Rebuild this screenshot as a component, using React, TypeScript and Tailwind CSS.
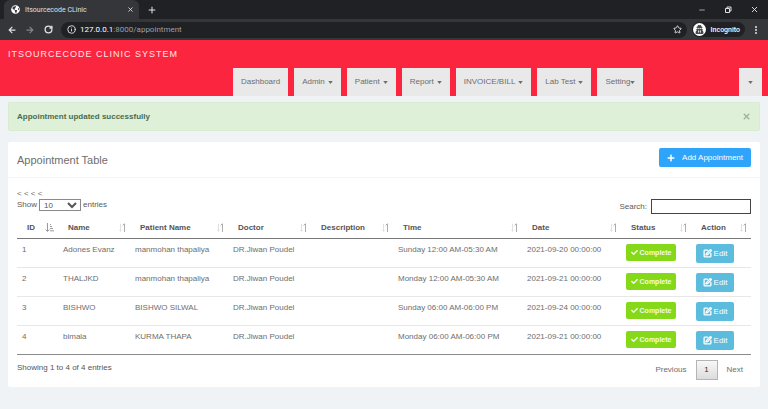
import { FaArrowLeft, FaArrowRight, FaCheck, FaGlobeAmericas, FaPlus, FaUserSecret } from "react-icons/fa"
import { Info, Minus, MoreVertical, Plus, RotateCw, SquarePen, Star, X } from "lucide-react"

const menu = [
    { label: "Dashboard", dropdown: false, gap: "gap-0" },
    { label: "Admin", dropdown: true, gap: "gap-[3px]" },
    { label: "Patient", dropdown: true, gap: "gap-[3px]" },
    { label: "Report", dropdown: true, gap: "gap-[3px]" },
    { label: "INVOICE/BILL", dropdown: true, gap: "gap-[3px]" },
    { label: "Lab Test", dropdown: true, gap: "gap-[3px]" },
    { label: "Setting", dropdown: true, gap: "gap-0" },
]

const columns = [
    { label: "ID", width: "w-[41px]" },
    { label: "Name", width: "w-[72px]" },
    { label: "Patient Name", width: "w-[98px]" },
    { label: "Doctor", width: "w-[83px]" },
    { label: "Description", width: "w-[82px]" },
    { label: "Time", width: "w-[129px]" },
    { label: "Date", width: "w-[99px]" },
    { label: "Status", width: "w-[70px]" },
    { label: "Action", width: "w-[60px]" },
]

const appointments = [
    { id: 1, name: "Adones Evanz", patient: "manmohan thapaliya", doctor: "DR.Jiwan Poudel", time: "Sunday 12:00 AM-05:30 AM", date: "2021-09-20 00:00:00" },
    { id: 2, name: "THALJKD", patient: "manmohan thapaliya", doctor: "DR.Jiwan Poudel", time: "Monday 12:00 AM-05:30 AM", date: "2021-09-21 00:00:00" },
    { id: 3, name: "BISHWO", patient: "BISHWO SILWAL", doctor: "DR.Jiwan Poudel", time: "Sunday 06:00 AM-06:00 PM", date: "2021-09-24 00:00:00" },
    { id: 4, name: "bimala", patient: "KURMA THAPA", doctor: "DR.Jiwan Poudel", time: "Monday 06:00 AM-06:00 PM", date: "2021-09-21 00:00:00" },
]

function Caret() {
    return (
        <svg viewBox="0 0 6 4" className="h-[3px] w-[5px] shrink-0 fill-current" aria-hidden="true">
            <path d="M0 0h6L3 4z" />
        </svg>
    )
}

function SortIcon({ active }: { active: boolean }) {
    if (active) {
        return (
            <svg viewBox="0 0 9 9" className="h-[9px] w-[9px] shrink-0" fill="none" stroke="#9a9a9a" aria-hidden="true">
                <path d="M2.5 0v8M.7 6.5l1.8 2 1.8-2M5 1.5h1M5 3.5h2M5 5.5h3M5 7.8h4" />
            </svg>
        )
    }
    return (
        <svg viewBox="0 0 7 9" className="h-[9px] w-[7px] shrink-0" fill="none" aria-hidden="true">
            <path d="M1.5 1v7M.3 6.8l1.2 1.6 1.2-1.6" stroke="#e0e0e0" />
            <path d="M5.5 9V1M3.6 2.4L5.5.6" stroke="#adadad" />
        </svg>
    )
}

function BrowserBar() {
    return (
        <div className="bg-[#202124] font-['Roboto','Noto_Sans',sans-serif] text-[#dee1e6]">
            <div className="flex h-[19px] items-center">
                <div className="ml-1 flex h-full w-[135px] items-center rounded-t-md bg-[#35363a] pr-[5px] pl-[7px]">
                    <FaGlobeAmericas className="size-[9px] text-white" />
                    <span className="ml-[5px] flex-1 text-[7px]">Itsourcecode CLinic</span>
                    <button type="button" aria-label="Close tab">
                        <X className="size-[7px]" strokeWidth={3} />
                    </button>
                </div>
                <button type="button" aria-label="New tab" className="ml-2">
                    <Plus className="size-[10px]" strokeWidth={2.5} />
                </button>
                <div className="mr-[9px] ml-auto flex items-center gap-[18px]">
                    <button type="button" aria-label="Minimize"><Minus className="size-2" /></button>
                    <button type="button" aria-label="Restore">
                        <svg viewBox="0 0 8 8" className="size-[8px]" fill="none" stroke="currentColor" aria-hidden="true">
                            <path d="M1.5 2.5h4v4h-4zM3 2.5V1h4v4H5.5" />
                        </svg>
                    </button>
                    <button type="button" aria-label="Close"><X className="size-[9px]" strokeWidth={2.5} /></button>
                </div>
            </div>
            <div className="flex h-[21px] items-center bg-[#35363a] pr-[7px] pl-2">
                <button type="button" aria-label="Back"><FaArrowLeft className="size-2" /></button>
                <button type="button" aria-label="Forward" className="ml-[10px] text-[#85868a]"><FaArrowRight className="size-2" /></button>
                <button type="button" aria-label="Reload" className="ml-[10px]"><RotateCw className="size-[9px]" strokeWidth={3.5} /></button>
                <div className="ml-2 flex h-[16px] flex-1 items-center rounded-full bg-[#202124] pr-[5px] pl-[6px]">
                    <Info className="size-[9px]" strokeWidth={2.5} />
                    <span className="ml-1 flex-1 text-[8px] text-[#9aa0a6]">
                        <span className="text-white">127.0.0.1</span>:8000/appointment
                    </span>
                    <Star className="size-[9px]" strokeWidth={2.5} />
                </div>
                <div className="ml-[5px] flex h-[15px] items-center gap-[5px] rounded-full bg-[#202124] pr-[5px] pl-px text-[7px] font-medium text-white">
                    <span className="flex size-[13px] items-center justify-center rounded-full bg-white">
                        <FaUserSecret className="size-[9px] text-[#45474b]" />
                    </span>
                    Incognito
                </div>
                <button type="button" aria-label="More" className="ml-[6px]"><MoreVertical className="size-[10px]" strokeWidth={3} /></button>
            </div>
        </div>
    )
}

export default function App() {
    return (
        <div className="min-h-screen bg-[#eff3f6] font-['Liberation_Sans',Arial,sans-serif] text-[8px] leading-3 text-[#6e6e6e]">
            <BrowserBar />

            <header className="flex h-[56px] flex-col justify-between bg-[#fc253f]">
                <a href="#" className="self-start pt-2 pl-2 text-[9px] leading-3 tracking-[1px] text-[#ffe3e6]">ITSOURCECODE CLINIC SYSTEM</a>
                <nav className="flex h-[28px] gap-[6px] pr-[6px] pl-[233px]">
                    {menu.map((item) => (
                        <button key={item.label} type="button" className={`flex items-center bg-[#e9e9e9] px-2 ${item.gap}`}>
                            {item.label}
                            {item.dropdown && <Caret />}
                        </button>
                    ))}
                    <button type="button" aria-label="Account" className="ml-auto flex items-center bg-[#e9e9e9] px-[9px]">
                        <Caret />
                    </button>
                </nav>
            </header>

            <main className="px-2 pt-[6px]">
                <div role="alert" className="flex h-[29px] items-center justify-between rounded-xs border border-[#d9ecd0] bg-[#dff0d8] pr-[8px] pl-2 font-bold text-[#4c6b4d]">
                    Appointment updated successfully
                    <button type="button" aria-label="Dismiss" className="text-[#a3b39d]">
                        <X className="size-[9px]" strokeWidth={4} />
                    </button>
                </div>

                <section className="mt-[11px] rounded-xs bg-white">
                    <div className="flex h-[36px] items-start justify-between border-b border-[#f3f5f7] px-[9px] pt-[6px]">
                        <h1 className="pt-1 text-[11px] leading-4">Appointment Table</h1>
                        <button type="button" className="flex h-[19px] items-center gap-[7px] rounded-xs bg-[#2fa4fb] px-2 text-white">
                            <FaPlus className="size-2" />
                            Add Appointment
                        </button>
                    </div>

                    <div className="px-[9px] pt-[10px] pb-[7px]">
                        <div className="leading-[11px]">&lt; &lt; &lt; &lt;</div>
                        <div className="flex items-start justify-between">
                            <label className="flex items-center gap-[2px] text-[#5a5a5a]">
                                Show
                                <select className="h-[12px] w-[42px] border border-[#8a8a8a] bg-white text-[8px] leading-none text-[#555]">
                                    <option>10</option>
                                    <option>25</option>
                                    <option>50</option>
                                    <option>100</option>
                                </select>
                                entries
                            </label>
                            <label className="flex items-center gap-1 text-[#5a5a5a]">
                                Search:
                                <input type="search" className="h-[15px] w-[100px] border border-[#444] bg-white px-1 text-[8px]" />
                            </label>
                        </div>

                        <table className="mt-[3px] w-full table-fixed border-separate border-spacing-0 border-b border-[#8c8c8c] text-left">
                            <thead>
                                <tr>
                                    {columns.map((column, index) => (
                                        <th key={column.label} className={`${column.width} h-[22px] border-b border-[#777] p-0 pr-[4px] pl-[10px] font-bold text-[#555]`}>
                                            <span className="flex items-center justify-between">
                                                {column.label}
                                                <SortIcon active={index === 0} />
                                            </span>
                                        </th>
                                    ))}
                                </tr>
                            </thead>
                            <tbody className="[&>tr+tr>td]:border-t [&>tr+tr>td]:border-[#e7e7e7] [&_td]:pt-[5px] [&_td]:pl-[5px] [&_td]:align-top [&_td]:whitespace-nowrap">
                                {appointments.map((row) => (
                                    <tr key={row.id}>
                                        <td>{row.id}</td>
                                        <td>{row.name}</td>
                                        <td>{row.patient}</td>
                                        <td>{row.doctor}</td>
                                        <td></td>
                                        <td>{row.time}</td>
                                        <td>{row.date}</td>
                                        <td>
                                            <button type="button" className="flex h-[17px] w-[50px] items-center justify-center gap-[2px] rounded-xs bg-[#86d918] text-[7px] font-bold text-[#f4fbe8]">
                                                <FaCheck className="size-[7px]" />
                                                Complete
                                            </button>
                                        </td>
                                        <td>
                                            <button type="button" className="mb-[4px] flex h-[19px] w-[38px] items-center justify-center gap-[2px] rounded-xs bg-[#5bbcde] text-white">
                                                <SquarePen className="size-[9px]" strokeWidth={3.5} />
                                                Edit
                                            </button>
                                        </td>
                                    </tr>
                                ))}
                            </tbody>
                        </table>

                        <div className="flex items-start justify-between pt-[5px]">
                            <p className="pt-[2px] text-[#555]">Showing 1 to 4 of 4 entries</p>
                            <div className="flex h-[20px] items-center">
                                <button type="button" className="px-[9px]">Previous</button>
                                <button type="button" aria-current="page" className="h-[20px] w-[22px] border border-[#b5b5b5] bg-linear-to-b from-[#f8f8f8] to-[#dcdcdc] text-[#333]">1</button>
                                <button type="button" className="pr-[8px] pl-[9px]">Next</button>
                            </div>
                        </div>
                    </div>
                </section>
            </main>
        </div>
    )
}
